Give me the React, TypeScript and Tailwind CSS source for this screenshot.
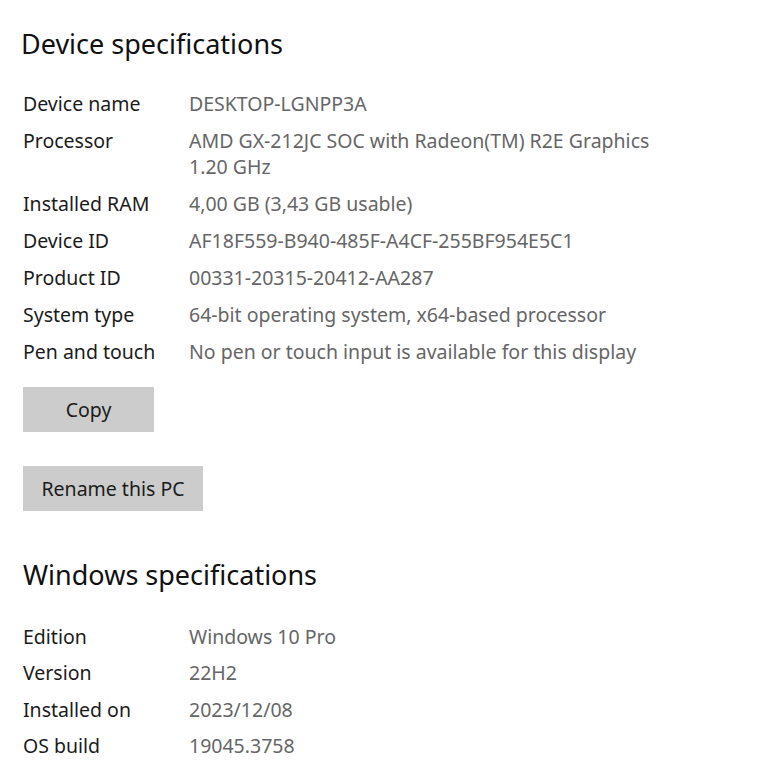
import React from "react";

const device: [string, string[]][] = [
  ["Device name", ["DESKTOP-LGNPP3A"]],
  ["Processor", ["AMD GX-212JC SOC with Radeon(TM) R2E Graphics", "1.20 GHz"]],
  ["Installed RAM", ["4,00 GB (3,43 GB usable)"]],
  ["Device ID", ["AF18F559-B940-485F-A4CF-255BF954E5C1"]],
  ["Product ID", ["00331-20315-20412-AA287"]],
  ["System type", ["64-bit operating system, x64-based processor"]],
  ["Pen and touch", ["No pen or touch input is available for this display"]],
];

const windows: [string, string[]][] = [
  ["Edition", ["Windows 10 Pro"]],
  ["Version", ["22H2"]],
  ["Installed on", ["2023/12/08"]],
  ["OS build", ["19045.3758"]],
];

function Rows({ rows, gap }: { rows: [string, string[]][]; gap: string }) {
  return (
    <div className={gap}>
      {rows.map(([k, v]) => (
        <div key={k} className="flex leading-[26px]">
          <div className="w-[166px] shrink-0 text-[#1b1b1b]">{k}</div>
          <div className="text-[#666666]">
            {v.map((line) => (
              <div key={line}>{line}</div>
            ))}
          </div>
        </div>
      ))}
    </div>
  );
}

export default function App() {
  return (
    <div
      className="w-[781px] h-[768px] bg-white pl-[23px] pt-[24px] text-[19.5px] overflow-hidden"
      style={{ fontFamily: '"Noto Sans", "Open Sans", sans-serif' }}
    >
      <h1 className="text-[27px] leading-[40px] text-[#111] -ml-[2px]">Device specifications</h1>
      <div className="mt-[27px]">
        <Rows rows={device} gap="flex flex-col gap-[11px]" />
      </div>
      <button className="mt-[22px] block w-[131px] h-[45px] bg-[#cccccc] text-[#1b1b1b] text-[19.5px]">
        Copy
      </button>
      <button className="mt-[34px] block w-[180px] h-[45px] bg-[#cccccc] text-[#1b1b1b] text-[19.5px]">
        Rename this PC
      </button>
      <h1 className="mt-[44px] text-[27px] leading-[40px] text-[#111]">Windows specifications</h1>
      <div className="mt-[29px]">
        <Rows rows={windows} gap="flex flex-col gap-[10.3px]" />
      </div>
    </div>
  );
}
